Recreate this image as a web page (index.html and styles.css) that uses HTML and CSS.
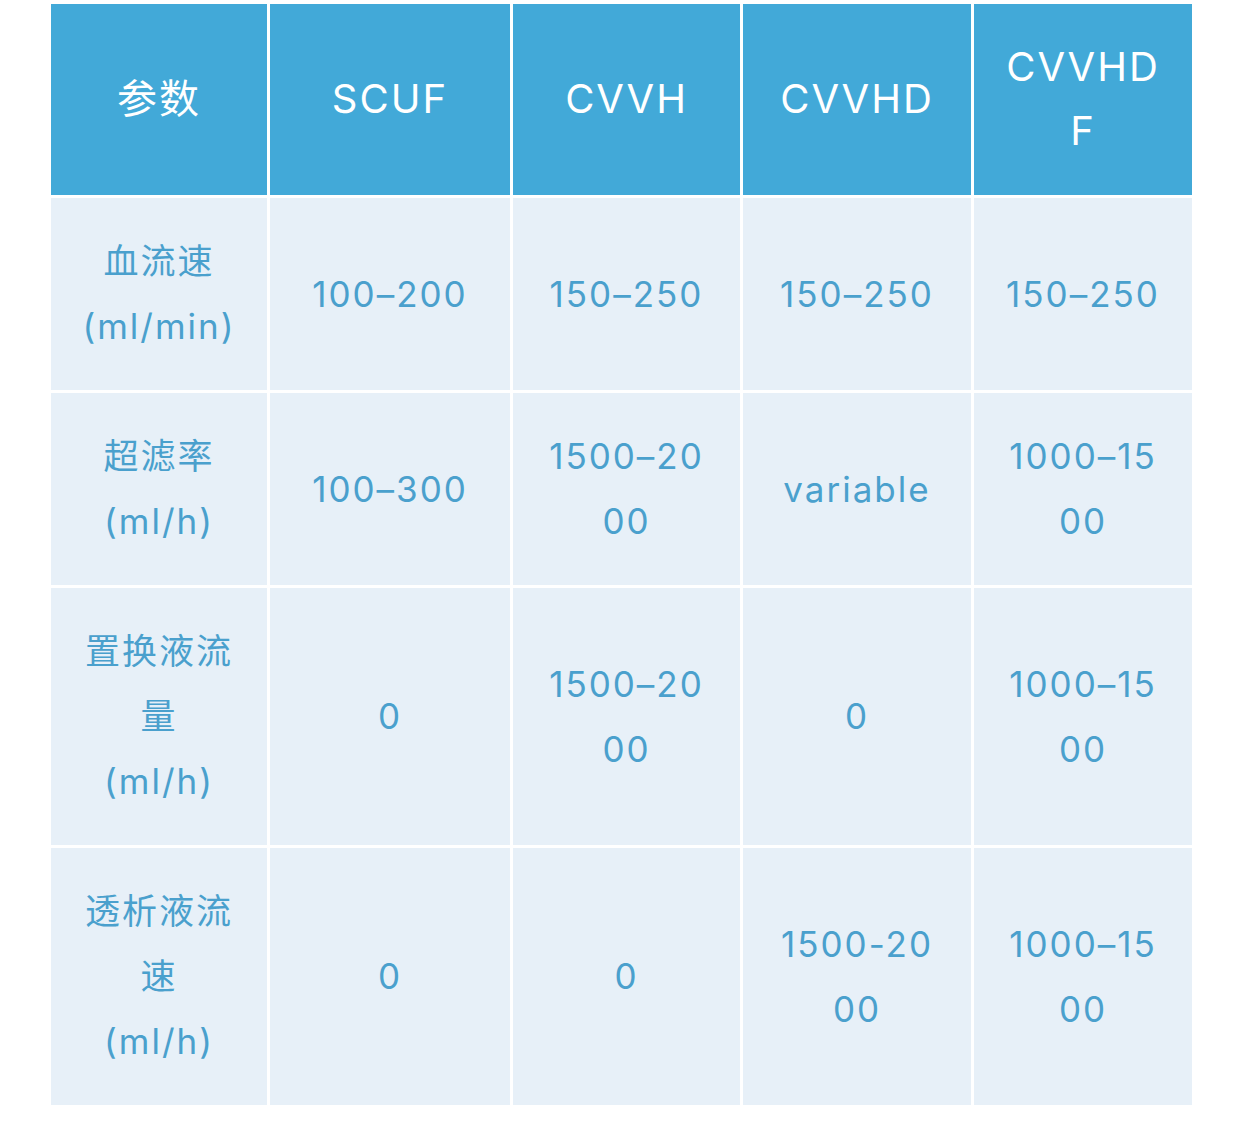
FILE: index.html
```html
<!DOCTYPE html>
<html lang="zh">
<head>
<meta charset="utf-8">
<link rel="stylesheet" href="styles.css">
</head>
<body>
<table class="params">
  <colgroup>
    <col class="c1"><col class="c2"><col class="c3"><col class="c4"><col class="c5">
  </colgroup>
  <thead>
    <tr>
      <th>参数</th>
      <th>SCUF</th>
      <th>CVVH</th>
      <th>CVVHD</th>
      <th>CVVHD<br>F</th>
    </tr>
  </thead>
  <tbody>
    <tr>
      <td>血流速<br>(ml/min)</td>
      <td>100–200</td>
      <td>150–250</td>
      <td>150–250</td>
      <td>150–250</td>
    </tr>
    <tr>
      <td>超滤率<br>(ml/h)</td>
      <td>100–300</td>
      <td>1500–20<br>00</td>
      <td>variable</td>
      <td>1000–15<br>00</td>
    </tr>
    <tr>
      <td>置换液流<br>量<br>(ml/h)</td>
      <td>0</td>
      <td>1500–20<br>00</td>
      <td>0</td>
      <td>1000–15<br>00</td>
    </tr>
    <tr>
      <td>透析液流<br>速<br>(ml/h)</td>
      <td>0</td>
      <td>0</td>
      <td>1500-20<br>00</td>
      <td>1000–15<br>00</td>
    </tr>
  </tbody>
</table>
</body>
</html>
```
FILE: styles.css
```css
html, body {
  margin: 0;
  padding: 0;
  background: #ffffff;
}
body {
  font-family: Inter, "Noto Sans CJK SC", "Noto Sans", sans-serif;
}
.params {
  border-collapse: separate;
  border-spacing: 3px;
  margin: 1px 0 0 48px;
  table-layout: fixed;
  width: 1147px;
}
.c1 { width: 216px; }
.c2 { width: 240px; }
.c3 { width: 227px; }
.c4 { width: 228px; }
.c5 { width: 218px; }
.params th,
.params td {
  text-align: center;
  vertical-align: middle;
  white-space: nowrap;
  padding: 31px 0;
  letter-spacing: 2px;
}
.params th {
  background: #42a9d8;
  color: #ffffff;
  font-weight: 400;
  font-size: 40px;
  line-height: 64px;
  padding: 31px 0 32px;
}
.params td {
  background: #e7f0f8;
  color: #4aa0cd;
  font-size: 35px;
  line-height: 65px;
}
```
